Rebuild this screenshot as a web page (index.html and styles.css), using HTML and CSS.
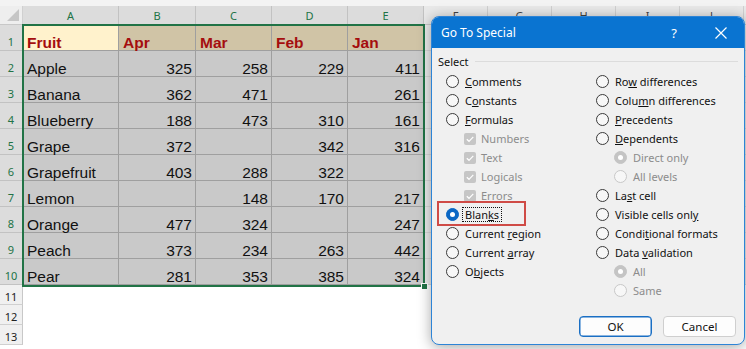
FILE: index.html
```html
<!DOCTYPE html>
<html>
<head>
<meta charset="utf-8">
<link rel="stylesheet" href="styles.css">
</head>
<body>
<div class="sheet">
  <div class="topstrip"></div>
  <div class="grid">
    <div class="ch corner"><span class="tri"></span></div>
    <div class="ch sel">A</div><div class="ch sel">B</div><div class="ch sel">C</div><div class="ch sel">D</div><div class="ch sel">E</div>
    <div class="ch">F</div><div class="ch">G</div><div class="ch">H</div><div class="ch">I</div><div class="ch">J</div><div class="ch"></div>

    <div class="rh sel">1</div>
    <div class="c hd first">Fruit</div><div class="c hd">Apr</div><div class="c hd">Mar</div><div class="c hd">Feb</div><div class="c hd">Jan</div>
    <div class="c e"></div><div class="c e"></div><div class="c e"></div><div class="c e"></div><div class="c e"></div><div class="c e"></div>

    <div class="rh sel">2</div>
    <div class="c t">Apple</div><div class="c n">325</div><div class="c n">258</div><div class="c n">229</div><div class="c n">411</div>
    <div class="c e"></div><div class="c e"></div><div class="c e"></div><div class="c e"></div><div class="c e"></div><div class="c e"></div>

    <div class="rh sel">3</div>
    <div class="c t">Banana</div><div class="c n">362</div><div class="c n">471</div><div class="c n"></div><div class="c n">261</div>
    <div class="c e"></div><div class="c e"></div><div class="c e"></div><div class="c e"></div><div class="c e"></div><div class="c e"></div>

    <div class="rh sel">4</div>
    <div class="c t">Blueberry</div><div class="c n">188</div><div class="c n">473</div><div class="c n">310</div><div class="c n">161</div>
    <div class="c e"></div><div class="c e"></div><div class="c e"></div><div class="c e"></div><div class="c e"></div><div class="c e"></div>

    <div class="rh sel">5</div>
    <div class="c t">Grape</div><div class="c n">372</div><div class="c n"></div><div class="c n">342</div><div class="c n">316</div>
    <div class="c e"></div><div class="c e"></div><div class="c e"></div><div class="c e"></div><div class="c e"></div><div class="c e"></div>

    <div class="rh sel">6</div>
    <div class="c t">Grapefruit</div><div class="c n">403</div><div class="c n">288</div><div class="c n">322</div><div class="c n"></div>
    <div class="c e"></div><div class="c e"></div><div class="c e"></div><div class="c e"></div><div class="c e"></div><div class="c e"></div>

    <div class="rh sel">7</div>
    <div class="c t">Lemon</div><div class="c n"></div><div class="c n">148</div><div class="c n">170</div><div class="c n">217</div>
    <div class="c e"></div><div class="c e"></div><div class="c e"></div><div class="c e"></div><div class="c e"></div><div class="c e"></div>

    <div class="rh sel">8</div>
    <div class="c t">Orange</div><div class="c n">477</div><div class="c n">324</div><div class="c n"></div><div class="c n">247</div>
    <div class="c e"></div><div class="c e"></div><div class="c e"></div><div class="c e"></div><div class="c e"></div><div class="c e"></div>

    <div class="rh sel">9</div>
    <div class="c t">Peach</div><div class="c n">373</div><div class="c n">234</div><div class="c n">263</div><div class="c n">442</div>
    <div class="c e"></div><div class="c e"></div><div class="c e"></div><div class="c e"></div><div class="c e"></div><div class="c e"></div>

    <div class="rh sel">10</div>
    <div class="c t">Pear</div><div class="c n">281</div><div class="c n">353</div><div class="c n">385</div><div class="c n">324</div>
    <div class="c e"></div><div class="c e"></div><div class="c e"></div><div class="c e"></div><div class="c e"></div><div class="c e"></div>

    <div class="rh small">11</div>
    <div class="c w"></div><div class="c w"></div><div class="c w"></div><div class="c w"></div><div class="c w"></div>
    <div class="c w"></div><div class="c w"></div><div class="c w"></div><div class="c w"></div><div class="c w"></div><div class="c w"></div>

    <div class="rh small">12</div>
    <div class="c w"></div><div class="c w"></div><div class="c w"></div><div class="c w"></div><div class="c w"></div>
    <div class="c w"></div><div class="c w"></div><div class="c w"></div><div class="c w"></div><div class="c w"></div><div class="c w"></div>

    <div class="rh small">13</div>
    <div class="c w"></div><div class="c w"></div><div class="c w"></div><div class="c w"></div><div class="c w"></div>
    <div class="c w"></div><div class="c w"></div><div class="c w"></div><div class="c w"></div><div class="c w"></div><div class="c w"></div>
  </div>
  <div class="selbox"></div>
  <div class="handle"></div>
</div>

<div class="dialog">
  <div class="titlebar">
    <span class="title">Go To Special</span>
    <span class="help">?</span>
    <svg class="close" width="12" height="12" viewBox="0 0 12 12"><path d="M0.5 0.5 L11.5 11.5 M11.5 0.5 L0.5 11.5" stroke="#fff" stroke-width="1.2" fill="none"/></svg>
  </div>
  <div class="body">
    <div class="legend"><span>Select</span><span class="rule"></span></div>
    <div class="cols">
      <div class="col">
        <div class="opt"><span class="radio"></span><span><u>C</u>omments</span></div>
        <div class="opt"><span class="radio"></span><span>C<u>o</u>nstants</span></div>
        <div class="opt"><span class="radio"></span><span><u>F</u>ormulas</span></div>
        <div class="opt sub dis"><span class="cb"><svg width="12" height="12" viewBox="0 0 12 12"><path d="M2.8 6.2 L5 8.3 L9.3 3.8" stroke="#fff" stroke-width="1.2" fill="none"/></svg></span><span>Numbers</span></div>
        <div class="opt sub dis"><span class="cb"><svg width="12" height="12" viewBox="0 0 12 12"><path d="M2.8 6.2 L5 8.3 L9.3 3.8" stroke="#fff" stroke-width="1.2" fill="none"/></svg></span><span>Text</span></div>
        <div class="opt sub dis"><span class="cb"><svg width="12" height="12" viewBox="0 0 12 12"><path d="M2.8 6.2 L5 8.3 L9.3 3.8" stroke="#fff" stroke-width="1.2" fill="none"/></svg></span><span>Logicals</span></div>
        <div class="opt sub dis"><span class="cb"><svg width="12" height="12" viewBox="0 0 12 12"><path d="M2.8 6.2 L5 8.3 L9.3 3.8" stroke="#fff" stroke-width="1.2" fill="none"/></svg></span><span>Errors</span></div>
        <div class="opt"><span class="radio on"></span><span class="focus">Blan<u>k</u>s</span></div>
        <div class="opt"><span class="radio"></span><span>Current <u>r</u>egion</span></div>
        <div class="opt"><span class="radio"></span><span>Current <u>a</u>rray</span></div>
        <div class="opt"><span class="radio"></span><span>O<u>b</u>jects</span></div>
      </div>
      <div class="col">
        <div class="opt"><span class="radio"></span><span>Ro<u>w</u> differences</span></div>
        <div class="opt"><span class="radio"></span><span>Colu<u>m</u>n differences</span></div>
        <div class="opt"><span class="radio"></span><span><u>P</u>recedents</span></div>
        <div class="opt"><span class="radio"></span><span><u>D</u>ependents</span></div>
        <div class="opt sub dis"><span class="radio dison"></span><span>Direct only</span></div>
        <div class="opt sub dis"><span class="radio disoff"></span><span>All levels</span></div>
        <div class="opt"><span class="radio"></span><span>La<u>s</u>t cell</span></div>
        <div class="opt"><span class="radio"></span><span>Visible cells onl<u>y</u></span></div>
        <div class="opt"><span class="radio"></span><span>Condi<u>t</u>ional formats</span></div>
        <div class="opt"><span class="radio"></span><span>Data <u>v</u>alidation</span></div>
        <div class="opt sub dis"><span class="radio dison"></span><span>All</span></div>
        <div class="opt sub dis"><span class="radio disoff"></span><span>Same</span></div>
      </div>
    </div>
  </div>
  <div class="footer">
    <div class="btn default">OK</div>
    <div class="btn">Cancel</div>
  </div>
</div>
<div class="mark"></div>
</body>
</html>
```

FILE: styles.css
```css
* { box-sizing: border-box; }
html, body { margin: 0; padding: 0; }
body {
  width: 746px;
  height: 349px;
  overflow: hidden;
  background: #fff;
  position: relative;
}

.sheet {
  position: relative;
  width: 746px;
  height: 349px;
  overflow: hidden;
  font-family: "Liberation Sans", Arial, sans-serif;
}
.topstrip {
  height: 6px;
  background: #f3f3f3;
}
.grid {
  display: grid;
  grid-template-columns: 23px 96px 77px 76px 76px 76px 64px 64px 64px 64px 64px 64px;
  grid-template-rows: 19px repeat(10, 26px) repeat(3, 20px);
  width: 810px;
}
.ch {
  background: #e9e9e9;
  border-right: 1px solid #d0d0d0;
  border-bottom: 1px solid #c8c8c8;
  font-family: "Noto Sans", sans-serif;
  font-size: 11px;
  color: #444;
  display: flex;
  align-items: center;
  justify-content: center;
  padding-top: 1px;
}
.ch.sel {
  background: #dcdcdc;
  color: #217346;
  border-right-color: #c2c2c2;
}
.ch.corner {
  background: #eeeeee;
  position: relative;
}
.tri {
  position: absolute;
  right: 3px;
  bottom: 3px;
  width: 0;
  height: 0;
  border-left: 12px solid transparent;
  border-bottom: 12px solid #c6c6c6;
}
.rh {
  background: #e9e9e9;
  border-right: 1px solid #c8c8c8;
  border-bottom: 1px solid #d0d0d0;
  font-family: "Noto Sans", sans-serif;
  font-size: 11px;
  color: #333;
  display: flex;
  align-items: flex-end;
  justify-content: center;
  padding-bottom: 1px;
}
.rh.sel {
  background: #dcdcdc;
  color: #217346;
  border-bottom-color: #c2c2c2;
}
.rh.small {
  background: #f0f0f0;
  padding-bottom: 0;
  color: #222;
}
.c {
  border-right: 1px solid #9f9f9f;
  border-bottom: 1px solid #9f9f9f;
  background: #c9c9c9;
  font-size: 15.5px;
  line-height: 15px;
  color: #111;
  display: flex;
  align-items: flex-end;
  padding-bottom: 0;
  white-space: nowrap;
}
.c.t { padding-left: 4px; }
.c.n { justify-content: flex-end; padding-right: 3px; }
.c.hd {
  background: #d0c4a6;
  color: #a50e0e;
  font-weight: bold;
  padding-left: 4px;
}
.c.hd.first { background: #fff2cc; }
.c.e {
  background: #ececec;
  border-right-color: #dadada;
  border-bottom-color: #dadada;
}
.c.w {
  background: #fff;
  border-right-color: #fff;
  border-bottom-color: #fff;
}

.selbox {
  position: absolute;
  left: 22px;
  top: 24px;
  width: 403px;
  height: 263px;
  border: 2px solid #217346;
}
.handle {
  position: absolute;
  left: 421px;
  top: 283px;
  width: 7px;
  height: 7px;
  background: #217346;
  border: 1px solid #fff;
}

/* dialog */
.dialog {
  position: absolute;
  left: 431px;
  top: 16px;
  width: 314px;
  height: 329px;
  border: 1px solid #2d84d6;
  border-radius: 8px;
  background: #f0f0f0;
  overflow: hidden;
  display: flex;
  flex-direction: column;
  font-family: "Noto Sans", sans-serif;
  font-size: 11px;
  color: #111;
  box-shadow: 0 2px 14px rgba(0, 0, 0, 0.35);
}
.titlebar {
  height: 31px;
  background: #0a74d1;
  color: #fff;
  display: flex;
  align-items: center;
  padding-left: 9px;
  padding-right: 17px;
  flex-shrink: 0;
}
.title {
  font-size: 12px;
  flex: 1;
}
.help {
  font-size: 13px;
  margin-right: 38px;
}
.close { display: block; }

.body {
  flex: 1;
  padding: 6px 6px 0 6px;
}
.legend {
  display: flex;
  align-items: center;
  height: 14px;
  padding-left: 0;
}
.rule {
  flex: 1;
  height: 1px;
  background: #dcdcdc;
  margin-left: 6px;
}
.cols {
  display: grid;
  grid-template-columns: 150px 1fr;
  margin-top: 4px;
  padding-left: 8px;
}
.opt {
  display: flex;
  align-items: center;
  height: 19px;
  white-space: nowrap;
}
.opt.sub { padding-left: 18px; }
.opt.dis { color: #8c8c8c; }
.radio {
  width: 13px;
  height: 13px;
  border-radius: 50%;
  border: 1px solid #3a3a3a;
  background: #f7f7f7;
  margin-right: 6px;
  flex-shrink: 0;
  position: relative;
}
.radio.on {
  background: #0a67c4;
  border-color: #0a67c4;
}
.radio.on::after {
  content: "";
  position: absolute;
  left: 3px;
  top: 3px;
  width: 5px;
  height: 5px;
  border-radius: 50%;
  background: #fff;
}
.radio.dison {
  background: #c4c4c4;
  border-color: #c4c4c4;
}
.radio.dison::after {
  content: "";
  position: absolute;
  left: 3px;
  top: 3px;
  width: 5px;
  height: 5px;
  border-radius: 50%;
  background: #fff;
}
.radio.disoff {
  border-color: #c8c8c8;
  background: #f7f7f7;
}
.cb {
  width: 12px;
  height: 12px;
  border-radius: 2px;
  background: #c6c6c6;
  margin-right: 5px;
  flex-shrink: 0;
  display: flex;
}
.focus {
  border: 1px dotted #111;
  padding: 0 2px;
  margin-left: -3px;
  line-height: 13px;
}

.footer {
  display: flex;
  justify-content: flex-end;
  gap: 11px;
  padding: 0 8px 7px 0;
}
.btn {
  width: 73px;
  height: 21px;
  border: 1px solid #cfcfcf;
  border-radius: 4px;
  background: #fdfdfd;
  display: flex;
  align-items: center;
  justify-content: center;
  font-size: 11.5px;
  color: #111;
}
.btn.default {
  border: 1px solid #1a6fc4;
  box-shadow: inset 0 0 0 0.5px #1a6fc4;
}

.mark {
  position: absolute;
  left: 437px;
  top: 201px;
  width: 89px;
  height: 25px;
  border: 2px solid #cf4b46;
}
```
